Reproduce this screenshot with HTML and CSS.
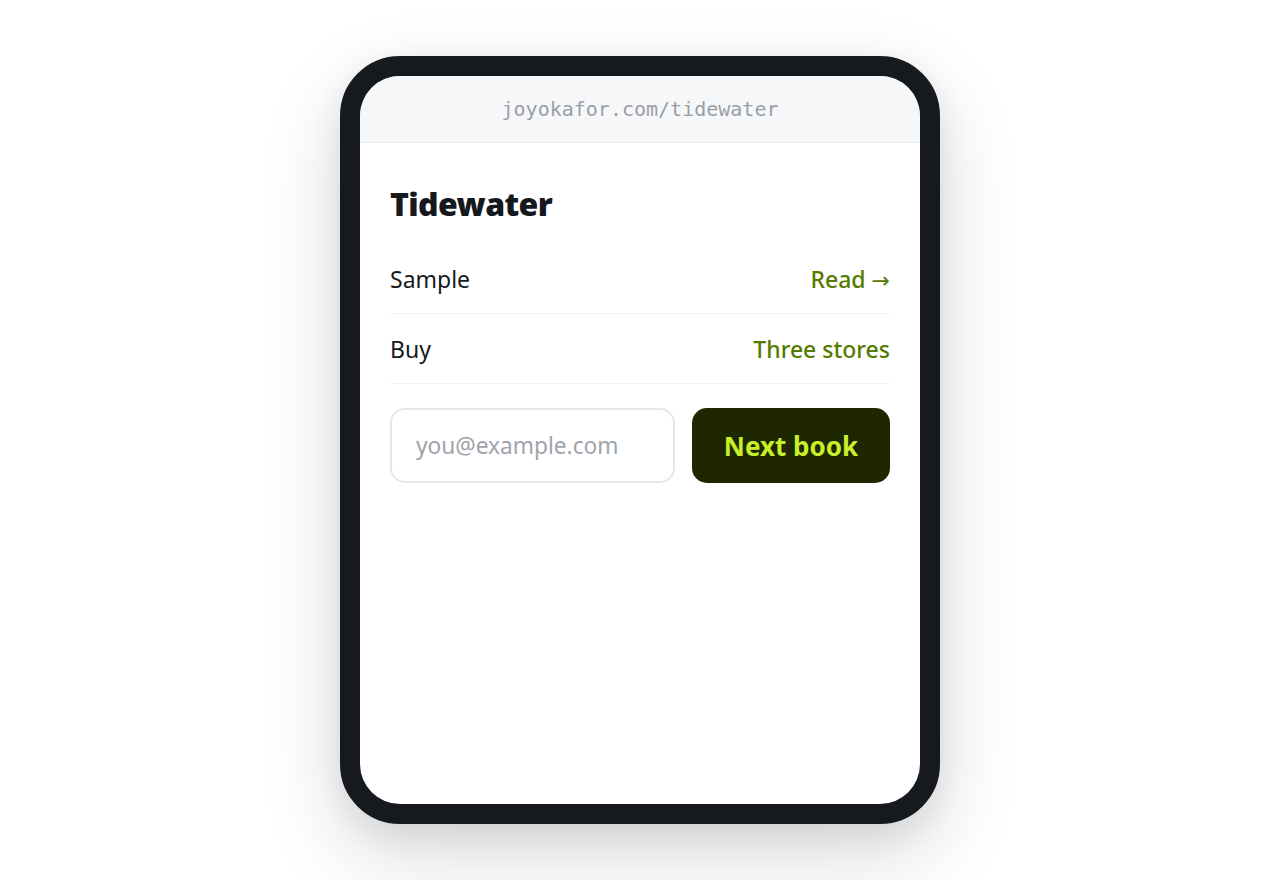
FILE: index.html
```html
<!DOCTYPE html>
<html lang="en">
<head>
<meta charset="utf-8">
<title>Tidewater</title>
<link rel="stylesheet" href="styles.css">
</head>
<body>
<div class="stage">
  <div class="phone">
    <div class="screen">
      <div class="urlbar">joyokafor.com/tidewater</div>
      <div class="content">
        <h1 class="title">Tidewater</h1>
        <div class="row">
          <span class="label">Sample</span>
          <a class="link" href="#">Read <span class="arrow">→</span></a>
        </div>
        <div class="row">
          <span class="label">Buy</span>
          <a class="link" href="#">Three stores</a>
        </div>
        <form class="signup">
          <input class="email" type="email" placeholder="you@example.com">
          <button class="btn" type="button">Next book</button>
        </form>
      </div>
    </div>
  </div>
</div>
</body>
</html>
```

FILE: styles.css
```css
* { box-sizing: border-box; }
html, body { margin: 0; padding: 0; background: #ffffff; }
body { font-family: "Noto Sans", "Open Sans", sans-serif; }
.stage {
  width: 1280px;
  height: 880px;
  display: flex;
  align-items: center;
  justify-content: center;
}
.phone {
  width: 600px;
  height: 768px;
  border: 20px solid #16191d;
  border-radius: 60px;
  background: #16191d;
  box-shadow: 0 30px 80px rgba(20, 24, 30, 0.16), 0 10px 30px rgba(20, 24, 30, 0.08);
}
.screen {
  width: 100%;
  height: 100%;
  background: #ffffff;
  border-radius: 40px;
  overflow: hidden;
  display: flex;
  flex-direction: column;
}
.urlbar {
  height: 67px;
  flex: none;
  background: #f6f7f9;
  border-bottom: 1px solid #e6e8eb;
  display: flex;
  align-items: center;
  justify-content: center;
  font-family: "DejaVu Sans Mono", "Liberation Mono", monospace;
  font-size: 20px;
  color: #9a9ea6;
  padding-bottom: 1px;
}
.content {
  padding: 38px 30px 0;
}
.title {
  margin: 0 0 17px;
  font-size: 32px;
  line-height: 46px;
  font-weight: 900;
  color: #15181c;
  letter-spacing: -0.6px;
}
.row {
  height: 70px;
  display: flex;
  align-items: center;
  justify-content: space-between;
  border-bottom: 1px solid #eff0f2;
  font-size: 23px;
  padding-top: 1px;
}
.label { color: #16191d; }
.link {
  color: #557a00;
  text-decoration: none;
  font-weight: 500;
}
.arrow {
  font-family: "DejaVu Sans", sans-serif;
  font-size: 22px;
}
.signup {
  margin: 24px 0 0;
  display: flex;
  gap: 17px;
}
.email {
  width: 285px;
  height: 75px;
  border: 2px solid #e6e7ea;
  border-radius: 15px;
  padding: 0 24px;
  font-family: inherit;
  font-size: 22.7px;
  color: #16191d;
  outline: none;
}
.email::placeholder { color: #a0a3ab; }
.btn {
  flex: 1;
  height: 75px;
  border: none;
  border-radius: 15px;
  background: #1f2700;
  color: #c8f02a;
  font-family: inherit;
  font-size: 26px;
  font-weight: 700;
  cursor: pointer;
}
```
